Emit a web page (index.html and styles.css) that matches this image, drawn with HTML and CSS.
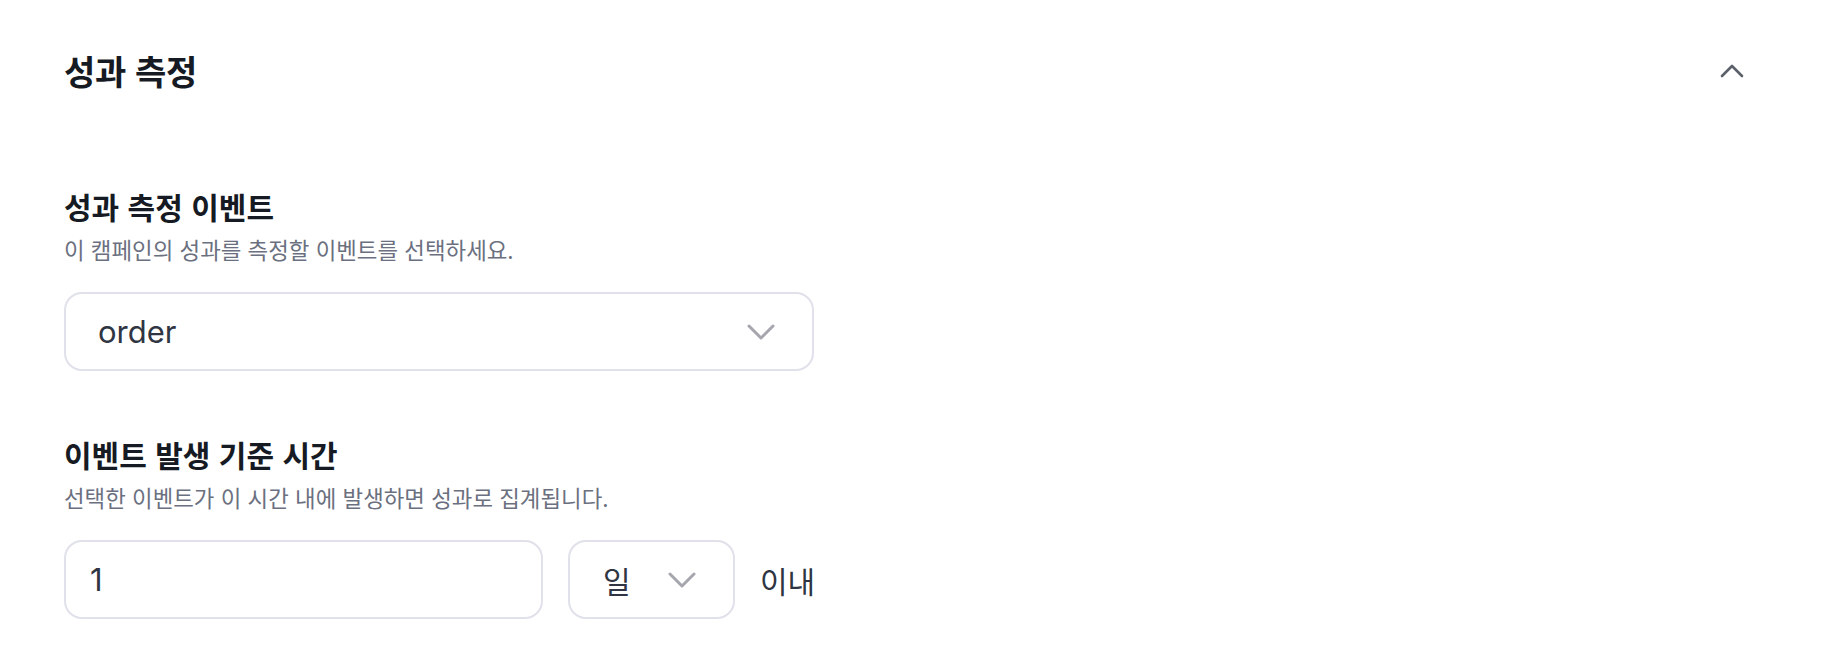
FILE: index.html
```html
<!DOCTYPE html>
<html lang="ko">
<head>
<meta charset="utf-8">
<title>성과 측정</title>
<link rel="stylesheet" href="styles.css">
</head>
<body>
<section class="panel">
  <header class="panel-head">
    <h2 class="panel-title">성과 측정</h2>
    <button class="collapse-btn" type="button" aria-label="접기">
      <svg width="24" height="14" viewBox="0 0 24 14" fill="none"><path d="M2 12 L12 2 L22 12" stroke="currentColor" stroke-width="2.6" stroke-linecap="round" stroke-linejoin="round"/></svg>
    </button>
  </header>

  <div class="field">
    <h3 class="field-label">성과 측정 이벤트</h3>
    <p class="field-desc">이 캠페인의 성과를 측정할 이벤트를 선택하세요.</p>
    <div class="select">
      <span class="select-value">order</span>
      <svg class="chev" width="28" height="16" viewBox="0 0 28 16" fill="none"><path d="M2 2 L14 14 L26 2" stroke="currentColor" stroke-width="3" stroke-linecap="round" stroke-linejoin="round"/></svg>
    </div>
  </div>

  <div class="field">
    <h3 class="field-label">이벤트 발생 기준 시간</h3>
    <p class="field-desc">선택한 이벤트가 이 시간 내에 발생하면 성과로 집계됩니다.</p>
    <div class="row">
      <div class="input"><span class="input-value">1</span></div>
      <div class="select unit">
        <span class="select-value">일</span>
        <svg class="chev" width="28" height="16" viewBox="0 0 28 16" fill="none"><path d="M2 2 L14 14 L26 2" stroke="currentColor" stroke-width="3" stroke-linecap="round" stroke-linejoin="round"/></svg>
      </div>
      <span class="row-suffix">이내</span>
    </div>
  </div>
</section>
</body>
</html>
```

FILE: styles.css
```css
* { box-sizing: border-box; }
html, body { margin: 0; padding: 0; background: #ffffff; }
body {
  font-family: Inter, "Noto Sans CJK KR", "Noto Sans", sans-serif;
  color: #111827;
}
.panel {
  padding: 51px 82px 0 64px;
}
.panel-head {
  display: flex;
  align-items: center;
  justify-content: space-between;
  height: 40px;
}
.panel-title {
  margin: 0;
  font-family: "Noto Sans CJK KR", sans-serif;
  font-size: 34px;
  line-height: 40px;
  font-weight: 700;
  letter-spacing: -0.01em;
  color: #161a23;
}
.collapse-btn {
  border: 0;
  background: none;
  padding: 0;
  display: flex;
  color: #5c606b;
  cursor: pointer;
}
.field {
  width: 750px;
}
.panel-head + .field { margin-top: 97px; }
.field + .field { margin-top: 65px; }
.field-label {
  margin: 0;
  font-family: "Noto Sans CJK KR", sans-serif;
  font-size: 30px;
  line-height: 36px;
  font-weight: 700;
  color: #161a23;
}
.field-desc {
  margin: 11px 0 0;
  font-family: "Noto Sans CJK KR", sans-serif;
  font-size: 22.4px;
  line-height: 28px;
  font-weight: 400;
  color: #6b7080;
}
.select, .input {
  margin-top: 29px;
  height: 79px;
  border: 2px solid #e0e1ea;
  border-radius: 18px;
  background: #fff;
  display: flex;
  align-items: center;
}
.select {
  justify-content: space-between;
  padding: 0 37px 0 32px;
}
.select-value, .input-value {
  font-size: 31px;
  color: #2f3542;
}
.chev { color: #a5a6ae; display: block; }
.row {
  display: flex;
  align-items: center;
  gap: 25px;
  margin-top: 29px;
  width: max-content;
}
.row .select, .row .input { margin-top: 0; }
.input {
  width: 479px;
  flex: none;
  padding: 0 24px;
}
.unit {
  width: 167px;
  flex: none;
  padding: 0 37px 0 33px;
}
.unit .select-value { font-family: "Noto Sans CJK KR", sans-serif; font-size: 30px; }
.row-suffix {
  font-family: "Noto Sans CJK KR", sans-serif;
  font-size: 30px;
  color: #2f3542;
}
```
